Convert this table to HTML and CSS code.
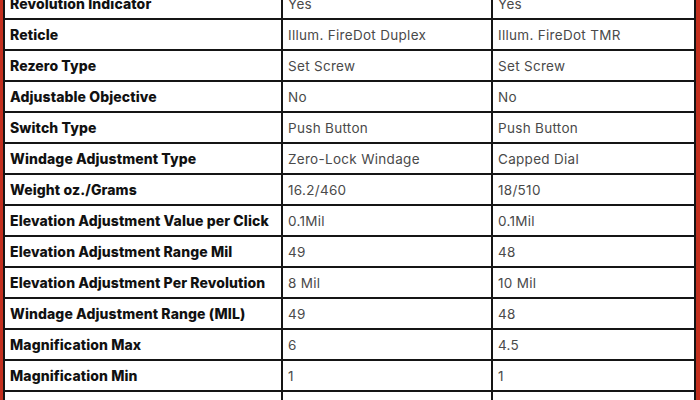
FILE: index.html
```html
<!DOCTYPE html>
<html>
<head>
<meta charset="utf-8">
<link rel="stylesheet" href="styles.css">
</head>
<body>
<div class="frame">
<table class="specs">
<colgroup><col class="c1"><col class="c2"><col class="c3"></colgroup>
<tbody>
<tr><td class="k">Revolution Indicator</td><td>Yes</td><td>Yes</td></tr>
<tr><td class="k">Reticle</td><td>Illum. FireDot Duplex</td><td>Illum. FireDot TMR</td></tr>
<tr><td class="k">Rezero Type</td><td>Set Screw</td><td>Set Screw</td></tr>
<tr><td class="k">Adjustable Objective</td><td>No</td><td>No</td></tr>
<tr><td class="k">Switch Type</td><td>Push Button</td><td>Push Button</td></tr>
<tr><td class="k">Windage Adjustment Type</td><td>Zero-Lock Windage</td><td>Capped Dial</td></tr>
<tr><td class="k">Weight oz./Grams</td><td>16.2/460</td><td>18/510</td></tr>
<tr><td class="k">Elevation Adjustment Value per Click</td><td>0.1Mil</td><td>0.1Mil</td></tr>
<tr><td class="k">Elevation Adjustment Range Mil</td><td>49</td><td>48</td></tr>
<tr><td class="k">Elevation Adjustment Per Revolution</td><td>8 Mil</td><td>10 Mil</td></tr>
<tr><td class="k">Windage Adjustment Range (MIL)</td><td>49</td><td>48</td></tr>
<tr><td class="k">Magnification Max</td><td>6</td><td>4.5</td></tr>
<tr><td class="k">Magnification Min</td><td>1</td><td>1</td></tr>
<tr><td class="k">Windage Value per Click (Mil)</td><td>0.1</td><td>0.1</td></tr>
</tbody>
</table>
</div>
</body>
</html>
```
FILE: styles.css
```css
html, body {
  margin: 0;
  padding: 0;
  background: #ffffff;
  overflow: hidden;
}
.frame {
  width: 700px;
  height: 400px;
  box-sizing: border-box;
  border-left: 3px solid #c4301f;
  border-right: 4px solid #c4301f;
  overflow: hidden;
}
.specs {
  width: 693px;
  margin-top: -13px;
  border-collapse: collapse;
  table-layout: fixed;
  font-family: Inter, "Liberation Sans", sans-serif;
  font-size: 13.5px;
}
.c1 { width: 278px; }
.c2 { width: 210px; }
.c3 { width: auto; }
.specs td {
  border: 2px solid #151515;
  height: 29px;
  padding: 0 5px;
  color: #4a4a4a;
  white-space: nowrap;
  overflow: hidden;
  vertical-align: middle;
  letter-spacing: 0.3px;
}
.specs td.k {
  color: #111111;
  font-weight: 800;
  font-size: 14px;
  padding-left: 5px;
  letter-spacing: 0.1px;
}
```
